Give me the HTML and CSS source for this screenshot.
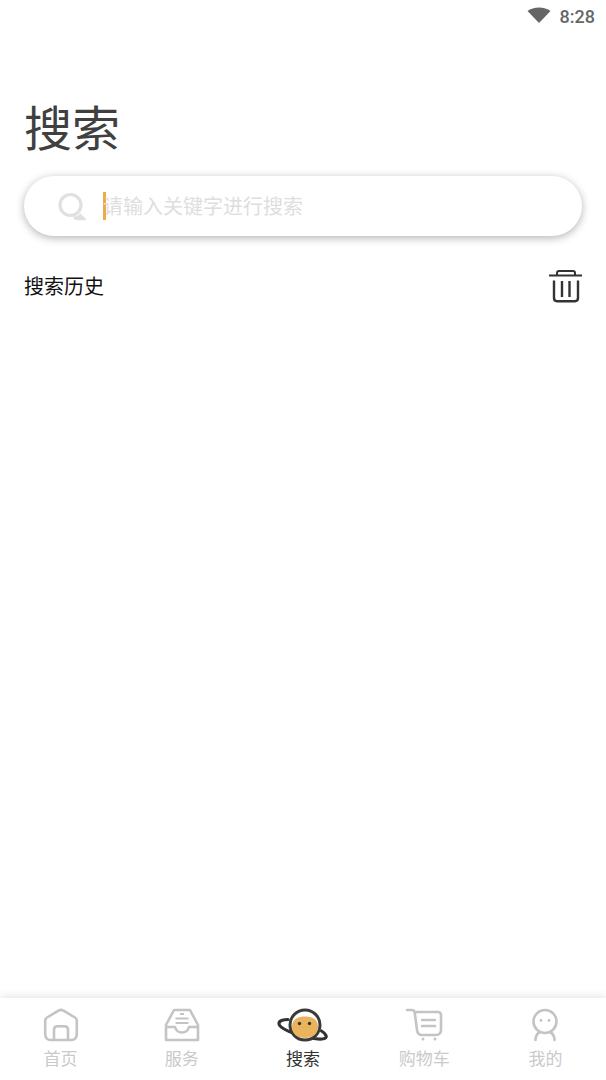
FILE: index.html
```html
<!DOCTYPE html>
<html lang="zh-CN">
<head>
  <meta charset="UTF-8" />
  <meta name="viewport" content="width=device-width, initial-scale=1.0" />
  <title>搜索</title>
  <link rel="stylesheet" href="styles.css">
</head>
<body>

  <!-- STATUS BAR -->
  <div class="statusbar">
    <svg class="wifi" width="24" height="16" viewBox="0 0 24 16">
      <path d="M0.500 4C3.500 1.800 7.500 0.500 12 0.500s8.500 1.300 11.500 3.500L12 16z" fill="#666"/>
    </svg>
    <span class="time">8:28</span>
  </div>

  <!-- SEARCH -->
  <main class="content">
    <h1 class="title">搜索</h1>

    <div class="searchbox">
      <svg class="searchicon" width="30" height="30" viewBox="0 0 30 30" fill="none">
        <circle cx="13.500" cy="13" r="10.500" stroke="#e0e0e0" stroke-width="3.200"/>
        <path d="M16 25c3-.3 5.500-1.500 7.500-3.500l5.500 5.500c.5.600.2 1.200-.6 1.200H20c-2 0-3.500-1.500-4-3.200z" fill="#e0e0e0"/>
      </svg>
      <span class="caret"></span>
      <span class="placeholder">请输入关键字进行搜索</span>
    </div>

    <div class="history">
      <span class="historytitle">搜索历史</span>
      <svg width="34" height="34" viewBox="0 0 34 34" fill="none" stroke="#333" stroke-width="2">
        <path d="M1 6.500h33"/>
        <path d="M9 6.500V4c0-1.200.8-2 2-2h14c1.200 0 2 .8 2 2v2.500"/>
        <path d="M6 11.500V29c0 2 1.200 3.200 3 3.200h18c1.800 0 3-1.200 3-3.200V11.500" stroke-width="2.400"/>
        <path d="M14 12v16M21.500 12v16" stroke-width="2.400"/>
      </svg>
    </div>
  </main>

  <!-- TAB BAR -->
  <nav class="tabbar">
    <div class="tab">
      <svg width="36" height="34" viewBox="0 0 36 34" fill="none" stroke="#c4c4c4" stroke-width="2.600" stroke-linejoin="round">
        <path d="M4 9.500 15.500 2.600c1.600-.9 3.400-.9 5 0L32 9.500c1 .6 1.800 1.800 1.800 3V26c0 3.500-2 6-5.500 6H7.700C4.200 32 2.200 29.500 2.200 26V12.500c0-1.200.8-2.400 1.800-3z"/>
        <path d="M11 32V22c0-2.400 1.400-3.700 3.500-3.700h7c2.100 0 3.500 1.300 3.500 3.700v10"/>
      </svg>
      <span>首页</span>
    </div>
    <div class="tab">
      <svg width="36" height="34" viewBox="0 0 36 34" fill="none" stroke="#c4c4c4" stroke-width="2.600" stroke-linejoin="round">
        <path d="M10 2h16l8 15v15H2V17z"/>
        <path d="M2 19h9c1 3.500 3.500 5.500 7 5.500s6-2 7-5.500h9"/>
        <path d="M16 6h4M11.500 10.500h13M11.500 15h13" stroke-width="2"/>
      </svg>
      <span>服务</span>
    </div>
    <div class="tab active">
      <svg class="planet" width="52" height="34" viewBox="0 0 52 34" fill="none">
        <path d="M11 11.500C6 11.500 2 13 2 15.500c0 3.500 8 7.500 18 11 10 3 20 5 25 4.500 3.500-.3 5-1.500 4-3.500-.7-1.500-2-3-4.500-4.500" stroke="#333" stroke-width="3.200" stroke-linecap="round"/>
        <circle cx="28" cy="17" r="15" fill="#fff" stroke="#3a3a3a" stroke-width="3"/>
        <path d="M15 19c0-6 3.500-10.500 13-10.500S41 13 41 19c0 7-5.500 11-13 11s-13-4-13-11z" fill="#eab45c"/>
        <circle cx="22.500" cy="15.500" r="1.700" fill="#333"/>
        <circle cx="32.500" cy="15.500" r="1.700" fill="#333"/>
      </svg>
      <span>搜索</span>
    </div>
    <div class="tab">
      <svg width="38" height="34" viewBox="0 0 38 34" fill="none" stroke="#c4c4c4" stroke-width="2.600" stroke-linecap="round" stroke-linejoin="round">
        <path d="M2 2h5c1.500 0 2.500 1 2.700 2.500L12 22c.4 3.200 2 5 5 5h14c3 0 5-2 5-5V7c0-2-1.300-3-3-3H10"/>
        <path d="M17 12h13M17 18h13"/>
        <circle cx="18" cy="31" r="1.500" fill="#c4c4c4" stroke="none"/>
        <circle cx="30" cy="31" r="1.500" fill="#c4c4c4" stroke="none"/>
      </svg>
      <span>购物车</span>
    </div>
    <div class="tab">
      <svg width="30" height="34" viewBox="0 0 30 34" fill="none" stroke="#c4c4c4" stroke-width="2.600" stroke-linecap="round">
        <circle cx="15" cy="13.500" r="11.500"/>
        <path d="M10 24C7 25.500 5.500 28.500 5.500 32M20 24c3 1.500 4.500 4.500 4.500 8"/>
        <circle cx="11" cy="12.500" r="1.400" fill="#c4c4c4" stroke="none"/>
        <circle cx="19" cy="12.500" r="1.400" fill="#c4c4c4" stroke="none"/>
      </svg>
      <span>我的</span>
    </div>
  </nav>

</body>
</html>
```

FILE: styles.css
```css
/* Global Styles */
* { box-sizing: border-box; margin: 0; padding: 0; }

body {
  width: 606px;
  height: 1080px;
  display: flex;
  flex-direction: column;
  background-color: #fff;
  font-family: "Roboto", "Noto Sans CJK SC", sans-serif;
  overflow: hidden;
}

/* Status bar */
.statusbar {
  height: 32px;
  display: flex;
  justify-content: flex-end;
  align-items: center;
  gap: 9px;
  padding-right: 11px;
}

.wifi { margin-top: -3px; }

.time {
  font-size: 18px;
  font-weight: 500;
  color: #666;
}

/* Search */
.content {
  flex: 1;
  padding: 66px 24px 0;
}

.title {
  font-size: 48px;
  font-weight: 400;
  line-height: 64px;
  color: #404040;
  margin-bottom: 14px;
}

.searchbox {
  height: 60px;
  display: flex;
  align-items: center;
  padding-left: 33px;
  background-color: #fff;
  border-radius: 30px;
  box-shadow: 0 2px 8px rgba(0, 0, 0, 0.3);
}

.searchicon { margin-right: 16px; margin-top: 1px; }

.caret {
  width: 3px;
  height: 28px;
  background-color: #eeaa44;
  flex-shrink: 0;
}

.placeholder {
  font-size: 20px;
  line-height: 28px;
  color: #dedede;
  margin-left: -3px;
  margin-top: 2px;
}

.history {
  display: flex;
  justify-content: space-between;
  align-items: center;
  margin-top: 33px;
}

.historytitle {
  font-size: 20px;
  line-height: 28px;
  color: #111;
  margin-top: 2px;
}

/* Tab bar */
.tabbar {
  height: 82px;
  display: grid;
  grid-template-columns: repeat(5, 1fr);
  background-color: #fff;
  box-shadow: 0 -2px 8px rgba(0, 0, 0, 0.1);
}

.tab {
  display: flex;
  flex-direction: column;
  align-items: center;
  padding-top: 10px;
  font-size: 17px;
  line-height: 26px;
  color: #cacaca;
}

.tab svg { display: block; }

.tab span { margin-top: 4px; }

.tab.active { color: #333; }
```
